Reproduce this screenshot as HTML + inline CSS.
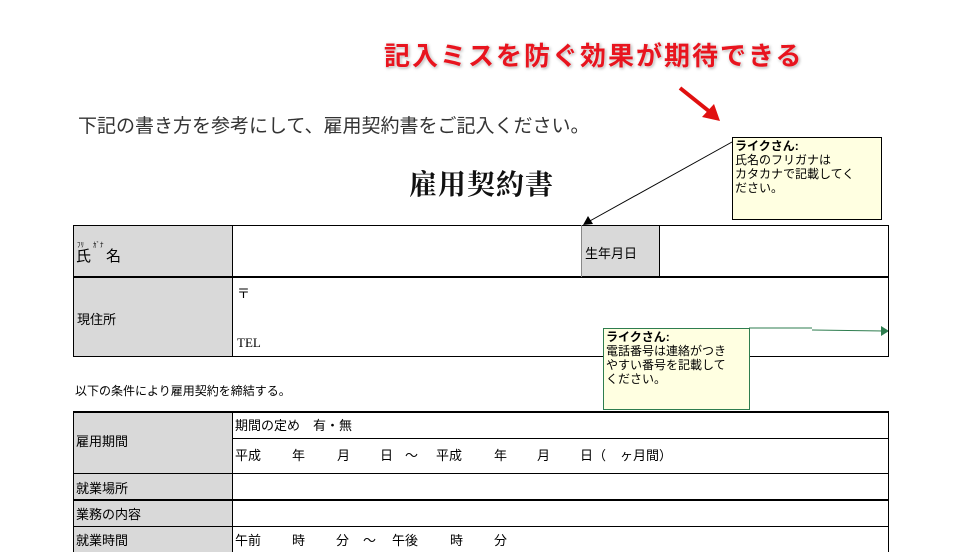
<html><head><style>
body{margin:0;width:964px;height:552px;background:#fff;position:relative;overflow:hidden;font-family:"Liberation Sans","Noto Sans CJK JP",sans-serif;}
.a{position:absolute;white-space:nowrap;}
.g{position:absolute;background:#d9d9d9;}
.h{position:absolute;background:#000;}
.t{position:absolute;font-size:13px;color:#000;white-space:nowrap;}
</style></head><body>
<div class="a" style="left:384px;top:36px;font-size:26px;font-weight:bold;color:#e8141e;text-shadow:0 0 2px #fff,1px 1px 3px #999;letter-spacing:2px">記入ミスを防ぐ効果が期待できる</div>
<svg class="a" style="left:0;top:0" width="964" height="552">
<line x1="680" y1="88" x2="710" y2="112" stroke="#e01010" stroke-width="4"/>
<polygon points="720,121 702,117 714,104" fill="#e01010"/>
<line x1="732" y1="142" x2="588" y2="222" stroke="#000" stroke-width="1"/>
<polygon points="583,225 593,224 588,216" fill="#000"/>
<line x1="749" y1="328" x2="812" y2="328" stroke="#2e7d4f"/>
<line x1="812" y1="330" x2="884" y2="331" stroke="#2e7d4f"/>
<polygon points="889,331 881,326 881,336" fill="#2e7d4f"/>
</svg>
<div class="a" style="left:78px;top:111px;font-size:19px;color:#333">下記の書き方を参考にして、雇用契約書をご記入ください。</div>
<div class="a" style="left:409px;top:163px;font-size:28px;font-weight:bold;letter-spacing:1px;font-family:'Liberation Serif','Noto Serif CJK SC',serif;color:#111">雇用契約書</div>
<!-- table1 -->
<div class="g" style="left:74px;top:226px;width:158px;height:131px"></div>
<div class="g" style="left:582px;top:226px;width:77px;height:51px"></div>
<div class="h" style="left:73px;top:225px;width:816px;height:1px"></div>
<div class="h" style="left:73px;top:276px;width:816px;height:2px"></div>
<div class="h" style="left:73px;top:356px;width:816px;height:1px"></div>
<div class="h" style="left:73px;top:225px;width:1px;height:132px"></div>
<div class="h" style="left:232px;top:225px;width:1px;height:132px"></div>
<div class="h" style="left:888px;top:225px;width:1px;height:132px"></div>
<div class="h" style="left:581px;top:225px;width:1px;height:52px;background:#888"></div>
<div class="h" style="left:659px;top:225px;width:1px;height:52px"></div>
<div class="t" style="left:77px;top:240px;font-size:7px">ﾌﾘ　 ｶﾞﾅ</div>
<div class="t" style="left:76px;top:245px;font-size:15px">氏　名</div>
<div class="t" style="left:585px;top:243px">生年月日</div>
<div class="t" style="left:237px;top:283px">〒</div>
<div class="t" style="left:77px;top:309px">現住所</div>
<div class="t" style="left:237px;top:335px;font-family:'Liberation Serif',serif">TEL</div>
<div class="t" style="left:75px;top:382px;font-size:12px">以下の条件により雇用契約を締結する。</div>
<!-- table2 -->
<div class="g" style="left:74px;top:412px;width:158px;height:140px"></div>
<div class="h" style="left:73px;top:411px;width:816px;height:2px"></div>
<div class="h" style="left:232px;top:438px;width:657px;height:1px"></div>
<div class="h" style="left:73px;top:473px;width:816px;height:1px"></div>
<div class="h" style="left:73px;top:499px;width:816px;height:2px"></div>
<div class="h" style="left:73px;top:526px;width:816px;height:1px"></div>
<div class="h" style="left:73px;top:411px;width:1px;height:141px"></div>
<div class="h" style="left:232px;top:411px;width:1px;height:141px"></div>
<div class="h" style="left:888px;top:411px;width:1px;height:141px"></div>
<div class="t" style="left:235px;top:415px">期間の定め　有・無</div>
<div class="t" style="left:76px;top:431px">雇用期間</div>
<div class="t" style="left:235px;top:445px">平成</div>
<div class="t" style="left:292px;top:445px">年</div>
<div class="t" style="left:337px;top:445px">月</div>
<div class="t" style="left:380px;top:445px">日</div>
<div class="t" style="left:405px;top:445px">～</div>
<div class="t" style="left:436px;top:445px">平成</div>
<div class="t" style="left:494px;top:445px">年</div>
<div class="t" style="left:537px;top:445px">月</div>
<div class="t" style="left:580px;top:445px">日（</div>
<div class="t" style="left:620px;top:445px">ヶ月間）</div>
<div class="t" style="left:76px;top:478px">就業場所</div>
<div class="t" style="left:76px;top:504px">業務の内容</div>
<div class="t" style="left:76px;top:530px">就業時間</div>
<div class="t" style="left:235px;top:530px">午前</div>
<div class="t" style="left:292px;top:530px">時</div>
<div class="t" style="left:336px;top:530px">分</div>
<div class="t" style="left:363px;top:530px">～</div>
<div class="t" style="left:392px;top:530px">午後</div>
<div class="t" style="left:450px;top:530px">時</div>
<div class="t" style="left:494px;top:530px">分</div>
<!-- comments -->
<div class="a" style="left:732px;top:137px;width:150px;height:83px;background:#ffffe1;border:1px solid #000;font-size:12px;line-height:14px;padding:1px 2px;box-sizing:border-box;white-space:normal"><b>ライクさん:</b><br>氏名のフリガナは<br>カタカナで記載してく<br>ださい。</div>
<div class="a" style="left:603px;top:328px;width:147px;height:82px;background:#ffffe1;border:1px solid #2e7d4f;font-size:12px;line-height:14px;padding:1px 2px;box-sizing:border-box;white-space:normal"><b>ライクさん:</b><br>電話番号は連絡がつき<br>やすい番号を記載して<br>ください。</div>
</body></html>
